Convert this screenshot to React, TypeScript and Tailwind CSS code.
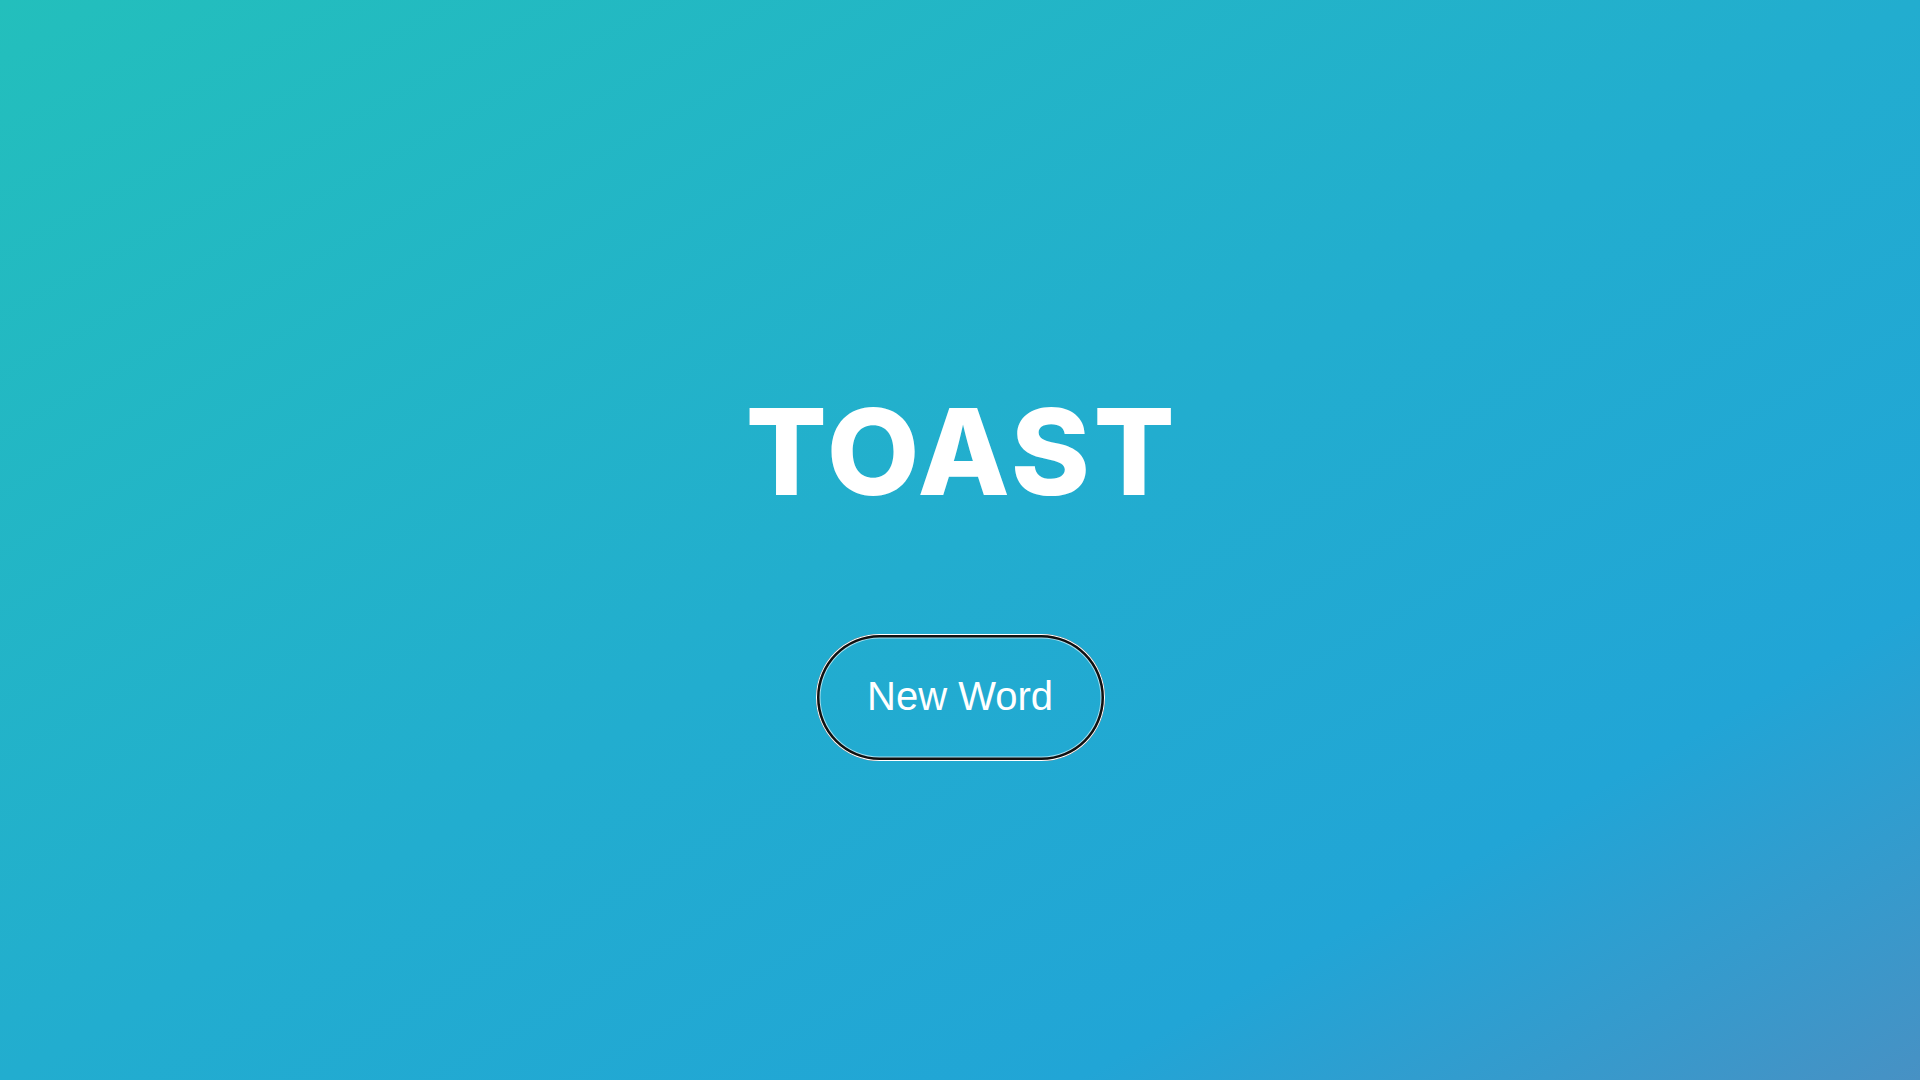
import React from "react";

export default function App() {
  return (
    <div className="w-[1920px] h-[1080px] overflow-hidden bg-[linear-gradient(to_bottom_right,#23bfbc_0%,#22adcf_50%,#21a5d6_78%,#4791c4_100%)] flex flex-col items-center">
      <h1 className="mt-[392px] pl-[4px] text-white text-[120px] leading-none font-extrabold font-['Inter',sans-serif] tracking-[3.5px]">
        TOAST
      </h1>
      <button className="mt-[122px] w-[289px] h-[127px] pb-[4px] rounded-full text-white text-[40px] font-['Liberation_Sans','Arial',sans-serif] shadow-[inset_0_0_0_1px_#ffffff,inset_0_0_0_3.5px_#111111,inset_0_0_0_4.5px_rgba(255,255,255,0.6)] flex items-center justify-center">
        New Word
      </button>
    </div>
  );
}
